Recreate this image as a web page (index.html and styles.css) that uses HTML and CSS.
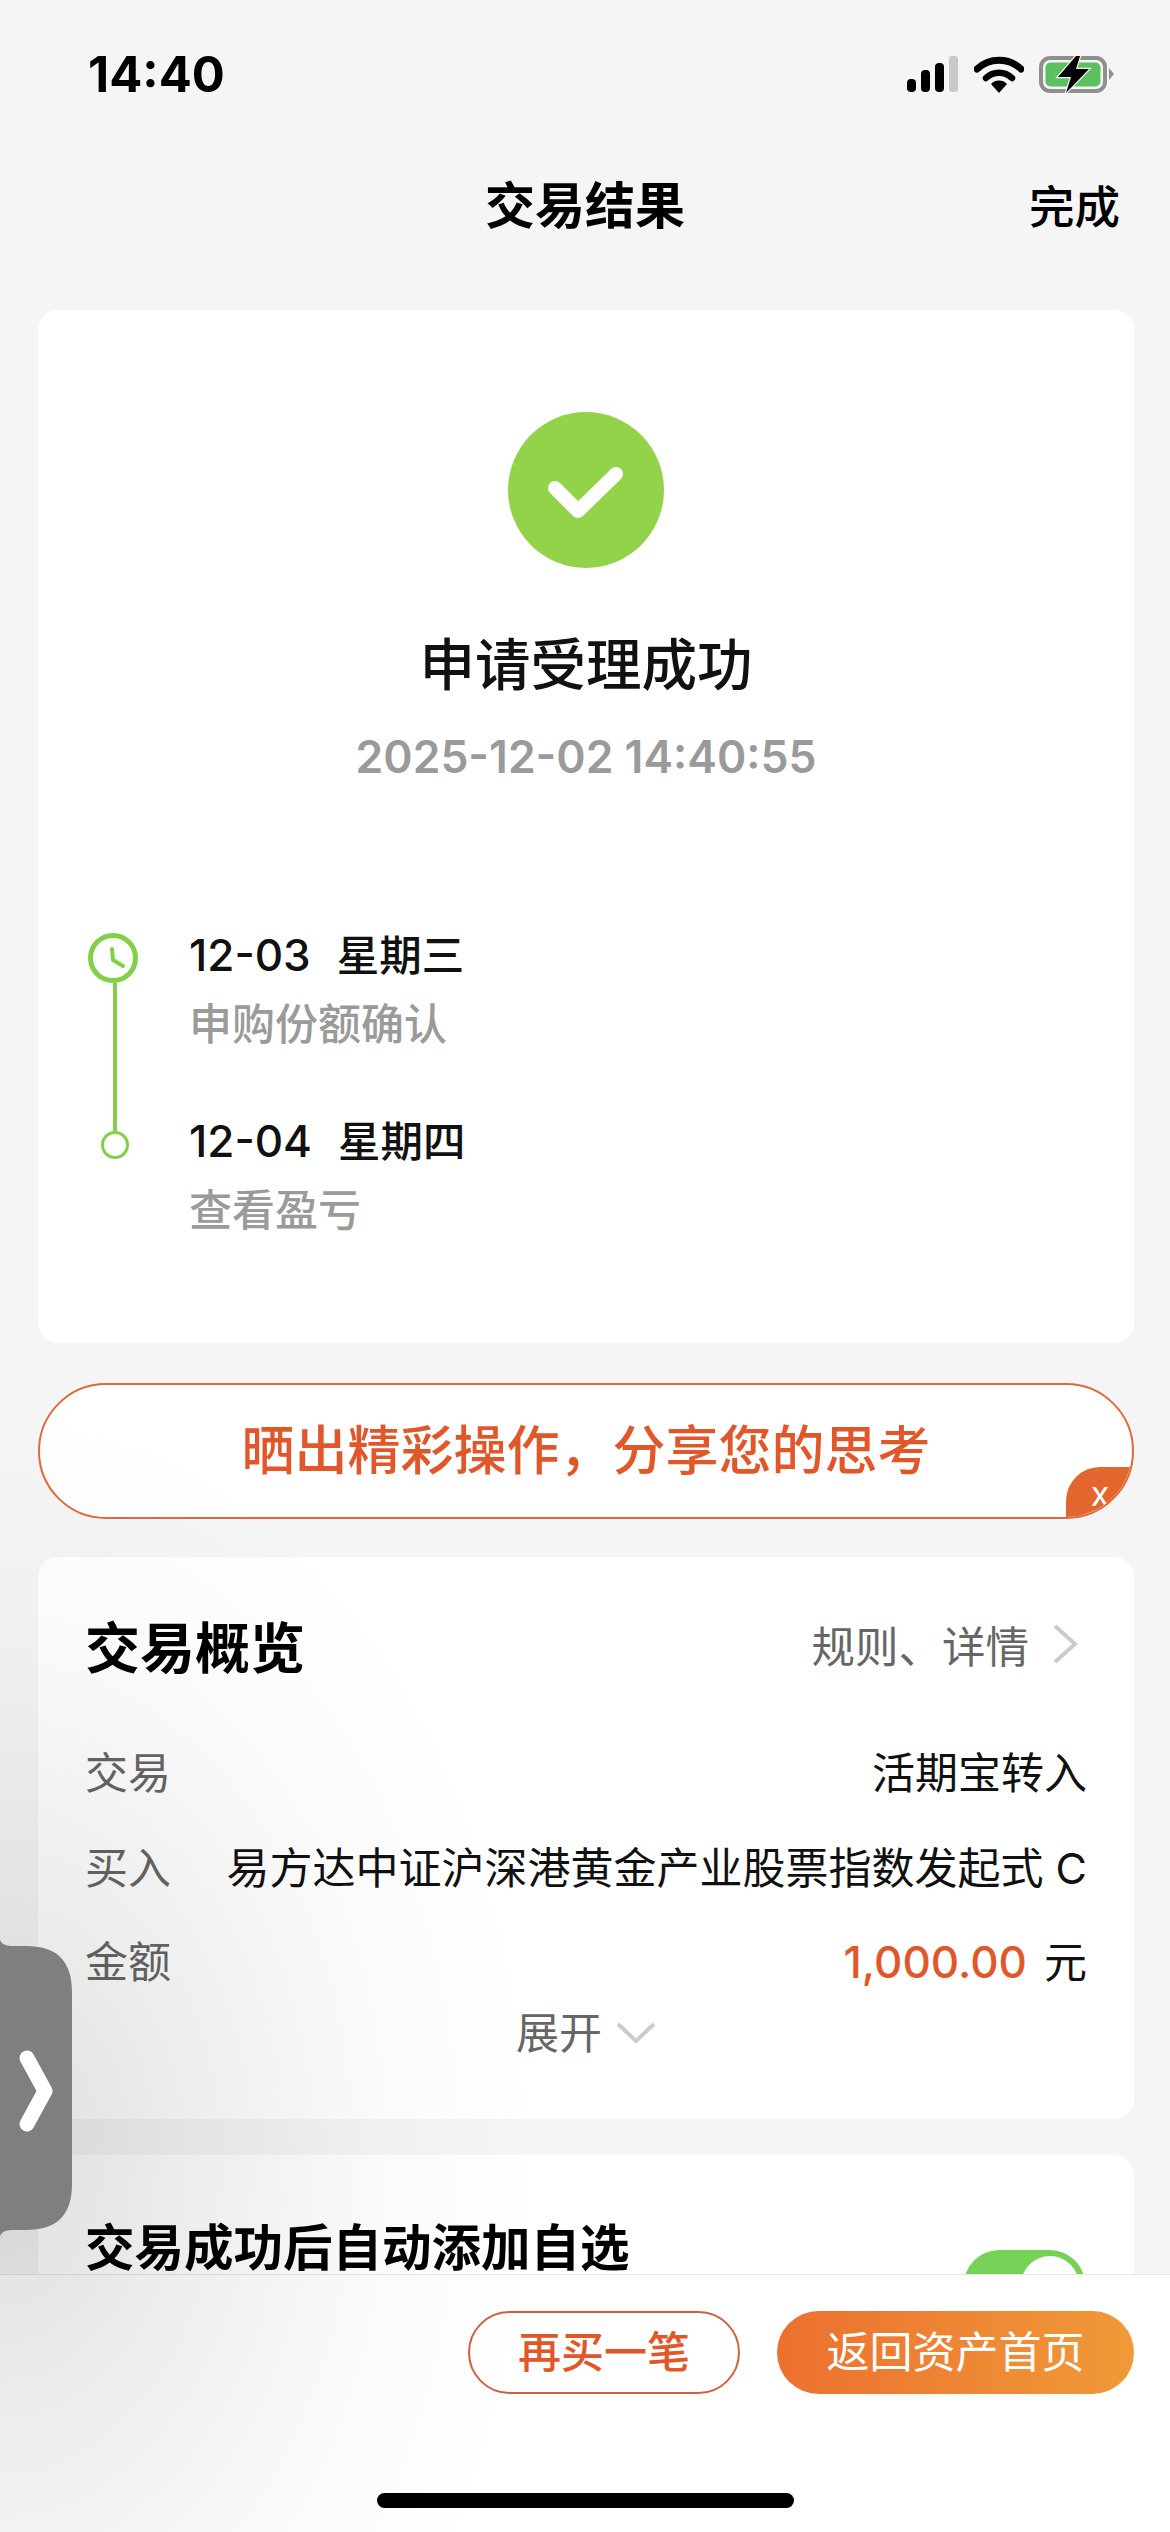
FILE: index.html
```html
<!DOCTYPE html>
<html lang="zh-CN">
<head>
    <meta charset="UTF-8">
    <meta name="viewport" content="width=device-width, initial-scale=1.0">
    <title>交易结果</title>
    <link rel="stylesheet" href="styles.css">
</head>
<body>
    <div class="status-bar">
        <div class="status-time">14:40</div>
        <div class="status-icons">
            <svg class="icon-signal" width="52" height="36" viewBox="0 0 52 36">
                <rect x="0" y="23" width="9" height="13" rx="4" fill="#000"/>
                <rect x="14" y="14" width="9" height="22" rx="4" fill="#000"/>
                <rect x="28" y="7" width="9" height="29" rx="4" fill="#000"/>
                <rect x="42" y="0" width="9" height="36" rx="3" fill="#c9c9c9"/>
            </svg>
            <svg class="icon-wifi" width="50" height="37" viewBox="0 0 50 37">
                <path d="M3 13 A32 32 0 0 1 47 13" fill="none" stroke="#000" stroke-width="7" stroke-linecap="round"/>
                <path d="M12 22 A19 19 0 0 1 38 22" fill="none" stroke="#000" stroke-width="6.5" stroke-linecap="round"/>
                <path d="M17 28 A11 11 0 0 1 33 28 L25 37 Z" fill="#000"/>
            </svg>
            <svg class="icon-battery" width="76" height="39" viewBox="0 0 76 39">
                <rect x="2" y="3" width="64" height="33" rx="9" fill="none" stroke="#8f8f8f" stroke-width="4"/>
                <rect x="6.500" y="7.500" width="55" height="24" rx="5" fill="#5cc05e"/>
                <path d="M70 13 L75 19 L70 25 Z" fill="#8f8f8f"/>
                <path d="M37 1 L19 22 H32 L27 38 L50 14 H37 L41 1 Z" fill="#000" stroke="#f5f5f5" stroke-width="2.500" paint-order="stroke"/>
            </svg>
        </div>
    </div>

    <div class="nav-bar">
        <div class="nav-title">交易结果</div>
        <div class="nav-done">完成</div>
    </div>

    <div class="content">
        <div class="card result-card">
            <svg class="result-icon" width="156" height="156" viewBox="0 0 156 156">
                <circle cx="78" cy="78" r="78" fill="#92d34a"/>
                <path d="M47 76 L70 99 L108 62" fill="none" stroke="#fff" stroke-width="14" stroke-linecap="round" stroke-linejoin="round"/>
            </svg>
            <div class="result-title">申请受理成功</div>
            <div class="result-time">2025-12-02 14:40:55</div>

            <div class="timeline">
                <div class="timeline-row timeline-row-first">
                    <div class="timeline-marker">
                        <svg class="timeline-clock" width="50" height="50" viewBox="0 0 50 50">
                            <circle cx="25" cy="25" r="22.500" fill="#fff" stroke="#83cf49" stroke-width="5"/>
                            <path d="M24 16 L25 27 L35 33" fill="none" stroke="#83cf49" stroke-width="4" stroke-linecap="round" stroke-linejoin="round"/>
                        </svg>
                        <div class="timeline-line"></div>
                    </div>
                    <div class="timeline-text">
                        <div class="timeline-date">12-03<span class="timeline-week">星期三</span></div>
                        <div class="timeline-desc">申购份额确认</div>
                    </div>
                </div>
                <div class="timeline-row">
                    <div class="timeline-marker">
                        <div class="timeline-dot"></div>
                    </div>
                    <div class="timeline-text">
                        <div class="timeline-date">12-04<span class="timeline-week">星期四</span></div>
                        <div class="timeline-desc">查看盈亏</div>
                    </div>
                </div>
            </div>
        </div>

        <div class="share-banner">
            <span class="share-text">晒出精彩操作，分享您的思考</span>
            <span class="share-close">x</span>
        </div>

        <div class="card overview-card">
            <div class="overview-head">
                <div class="overview-title">交易概览</div>
                <div class="overview-link">
                    规则、详情
                    <svg class="chevron-right" width="28" height="42" viewBox="0 0 28 42">
                        <path d="M4 3 L24 21 L4 39" fill="none" stroke="#cccccc" stroke-width="4"/>
                    </svg>
                </div>
            </div>
            <div class="overview-row">
                <span class="row-label">交易</span>
                <span class="row-value">活期宝转入</span>
            </div>
            <div class="overview-row">
                <span class="row-label">买入</span>
                <span class="row-value">易方达中证沪深港黄金产业股票指数发起式 C</span>
            </div>
            <div class="overview-row">
                <span class="row-label">金额</span>
                <span class="row-value"><span class="amount">1,000.00</span>元</span>
            </div>
            <div class="overview-more">
                展开
                <svg class="chevron-down" width="40" height="24" viewBox="0 0 40 24">
                    <path d="M2 3 L20 20 L38 3" fill="none" stroke="#cccccc" stroke-width="4"/>
                </svg>
            </div>
        </div>

        <div class="card watch-card">
            <div class="watch-title">交易成功后自动添加自选</div>
            <div class="switch"><div class="switch-knob"></div></div>
        </div>
    </div>

    <div class="footer">
        <div class="footer-buttons">
            <div class="btn btn-outline">再买一笔</div>
            <div class="btn btn-solid">返回资产首页</div>
        </div>
        <div class="home-bar"></div>
    </div>

    <!-- floating side handle and the shade it casts -->
    <div class="side-shade"></div>
    <svg class="side-handle" width="72" height="296" viewBox="0 0 72 296">
        <path d="M0 0 C2 4 5 6 14 6 H26 C56 6 72 20 72 52 V244 C72 276 56 290 26 290 H14 C5 290 2 292 0 296 Z" fill="#7f7f7f"/>
        <path d="M27 118 L45 151 L27 184" fill="none" stroke="#fff" stroke-width="15" stroke-linecap="round" stroke-linejoin="round"/>
    </svg>
</body>
</html>
```

FILE: styles.css
```css
* {
    box-sizing: border-box;
}
body {
    position: relative;
    display: flex;
    flex-direction: column;
    width: 1170px;
    height: 2532px;
    margin: 0;
    overflow: hidden;
    background-color: #f5f5f5;
    color: #111;
    font-family: "Inter", "Noto Sans CJK SC", sans-serif;
}

/* status bar */
.status-bar {
    flex: none;
    display: flex;
    justify-content: space-between;
    align-items: center;
    height: 148px;
    padding: 0 55px 0 88px;
}
.status-time {
    font-size: 49px;
    font-weight: 700;
    color: #000;
}
.status-icons {
    display: flex;
    align-items: center;
    gap: 15px;
}
.status-icons svg {
    display: block;
}

/* nav bar */
.nav-bar {
    flex: none;
    position: relative;
    height: 116px;
    line-height: 116px;
    text-align: center;
}
.nav-title {
    font-size: 50px;
    font-weight: 700;
    color: #000;
}
.nav-done {
    position: absolute;
    top: 2px;
    right: 50px;
    font-size: 45.500px;
    font-weight: 500;
    color: #000;
}

/* scrolling part */
.content {
    flex: 1;
    min-height: 0;
    overflow: hidden;
    padding: 46px 36px 0 38px;
}
.card {
    background: #fff;
    border-radius: 20px;
}

/* result card */
.result-card {
    height: 1033px;
    padding-top: 102px;
}
.result-icon {
    display: block;
    margin: 0 auto;
}
.result-title {
    margin-top: 62px;
    font-size: 55.500px;
    font-weight: 500;
    line-height: 70px;
    text-align: center;
}
.result-time {
    margin-top: 27px;
    font-size: 44.500px;
    font-weight: 600;
    line-height: 60px;
    color: #9a9a9a;
    text-align: center;
}
.timeline {
    margin-top: 143px;
    padding-left: 50px;
}
.timeline-row {
    display: flex;
    gap: 47px;
}
.timeline-row-first {
    height: 186px;
}
.timeline-marker {
    flex: none;
    display: flex;
    flex-direction: column;
    align-items: center;
    width: 54px;
}
.timeline-clock {
    display: block;
    flex: none;
    align-self: flex-start;
    margin-top: 3px;
}
.timeline-line {
    flex: 1;
    width: 4px;
    margin-bottom: -15px;
    background: #83cf49;
}
.timeline-dot {
    width: 28px;
    height: 28px;
    margin-top: 15px;
    border: 3.5px solid #83cf49;
    border-radius: 50%;
    background: #fff;
}
.timeline-date {
    font-size: 44px;
    font-weight: 500;
    line-height: 50px;
}
.timeline-week {
    margin-left: 26px;
    font-size: 42.500px;
    font-weight: 500;
}
.timeline-desc {
    margin-top: 18px;
    font-size: 43px;
    font-weight: 500;
    line-height: 50px;
    color: #9a9a9a;
}

/* share banner */
.share-banner {
    position: relative;
    height: 136px;
    margin-top: 40px;
    overflow: hidden;
    border: 2px solid #e2683c;
    border-radius: 68px;
    background: #fff;
    font-size: 53px;
    font-weight: 500;
    line-height: 132px;
    text-align: center;
    color: #e2572a;
}
.share-close {
    position: absolute;
    right: -2px;
    bottom: -2px;
    width: 68px;
    height: 52px;
    border-top-left-radius: 34px;
    background: #e2672f;
    font-size: 34px;
    font-weight: 400;
    line-height: 54px;
    color: #fff;
}

/* overview card */
.overview-card {
    height: 562px;
    margin-top: 38px;
    padding: 47px 47px 0 47px;
}
.overview-head {
    display: flex;
    justify-content: space-between;
    align-items: center;
    height: 80px;
    margin-bottom: 39px;
}
.overview-title {
    font-size: 55px;
    font-weight: 700;
    color: #000;
}
.overview-link {
    display: flex;
    align-items: center;
    gap: 22px;
    margin-right: 8px;
    font-size: 43.500px;
    color: #666;
}
.overview-row {
    display: flex;
    justify-content: space-between;
    align-items: center;
    height: 94.500px;
    font-size: 43px;
}
.row-label {
    color: #666;
}
.amount {
    margin-right: 17px;
    font-size: 44px;
    font-weight: 500;
    color: #e2572a;
}
.overview-more {
    display: flex;
    justify-content: center;
    align-items: center;
    gap: 14px;
    margin-top: 2px;
    font-size: 43px;
    line-height: 48px;
    color: #666;
}

/* auto add card */
.watch-card {
    display: flex;
    justify-content: space-between;
    align-items: flex-start;
    height: 300px;
    margin-top: 36px;
    padding: 68px 49px 0 47px;
}
.watch-title {
    font-size: 49.500px;
    font-weight: 700;
    line-height: 50px;
    color: #000;
}
.switch {
    position: relative;
    width: 121px;
    height: 70px;
    margin-top: 27px;
    border-radius: 35px;
    background: #76d157;
}
.switch-knob {
    position: absolute;
    top: 6px;
    right: 6px;
    width: 58px;
    height: 58px;
    border-radius: 50%;
    background: #fff;
}

/* bottom bar */
.footer {
    flex: none;
    height: 258px;
    padding-top: 36px;
    border-top: 1px solid #e6e6e6;
    background: #fff;
}
.footer-buttons {
    display: flex;
    justify-content: flex-end;
    gap: 37px;
    padding-right: 36px;
}
.btn {
    height: 83px;
    border-radius: 42px;
    font-size: 43px;
    font-weight: 500;
    line-height: 79px;
    text-align: center;
}
.btn-outline {
    width: 272px;
    border: 2px solid #d0603f;
    color: #e2572a;
}
.btn-solid {
    width: 357px;
    background: linear-gradient(90deg, #ec7030, #f09a38);
    font-weight: 400;
    line-height: 83px;
    color: #fff;
}
.home-bar {
    width: 417px;
    height: 15px;
    margin: 99px auto 0;
    border-radius: 8px;
    background: #000;
}

/* floating handle over the page */
.side-shade {
    position: absolute;
    left: 0;
    top: 1400px;
    width: 560px;
    height: 1132px;
    background: radial-gradient(ellipse 540px 760px at 0 760px, rgba(0, 0, 0, 0.13), rgba(0, 0, 0, 0.07) 35%, rgba(0, 0, 0, 0.02) 70%, rgba(0, 0, 0, 0) 100%);
    pointer-events: none;
}
.side-handle {
    position: absolute;
    left: 0;
    top: 1940px;
    display: block;
}
```
